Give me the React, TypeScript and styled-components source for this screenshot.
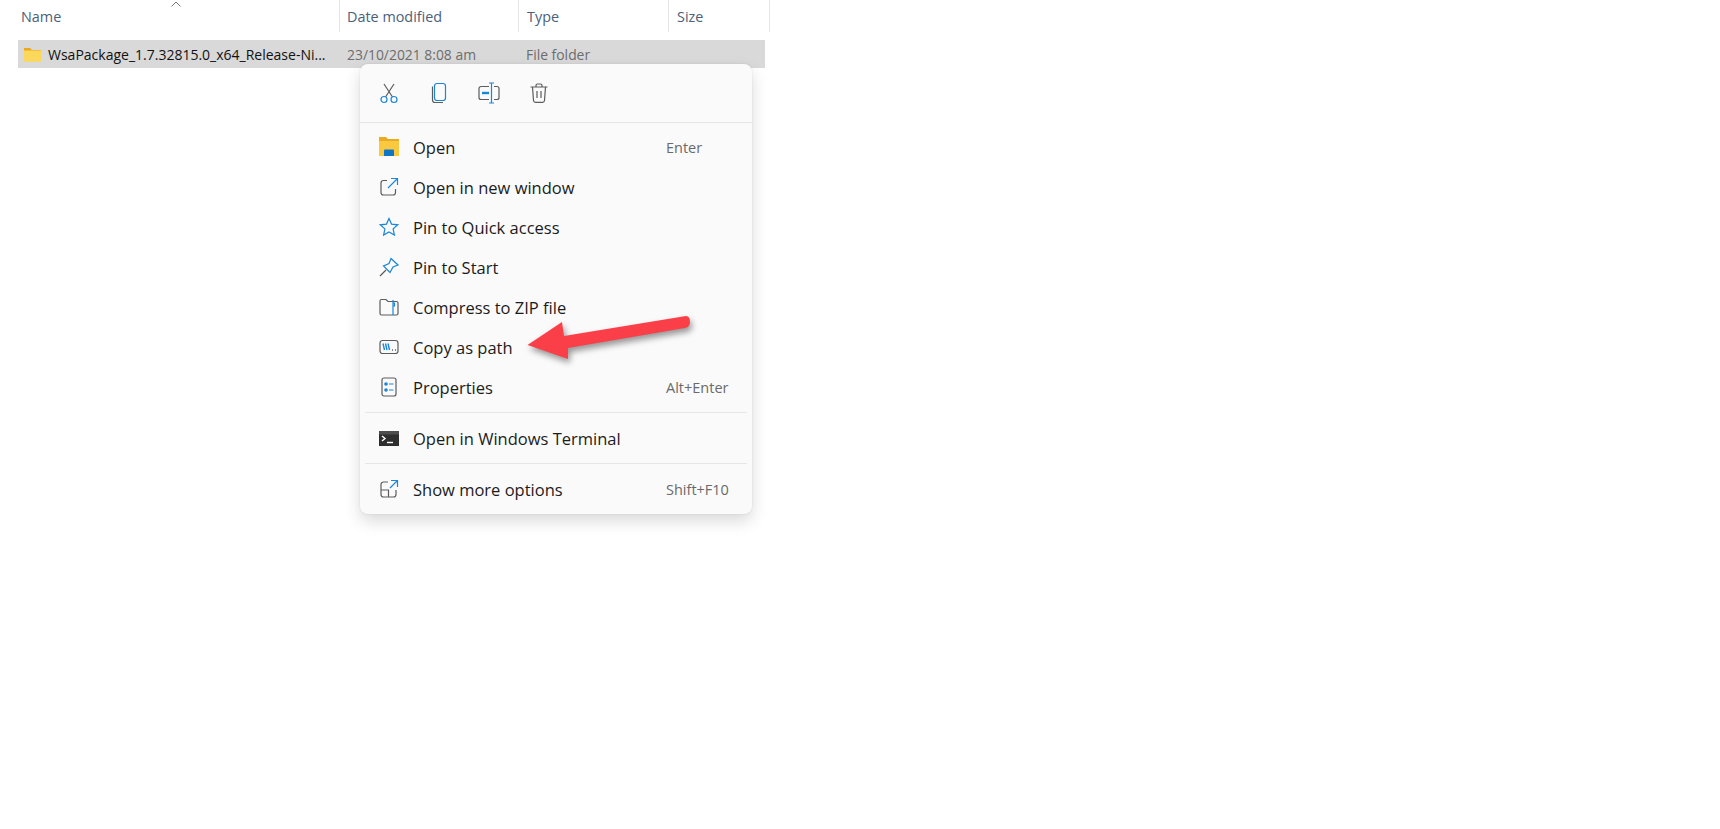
import { FC, ReactNode } from "react";
import styled, { createGlobalStyle } from "styled-components";

const BLUE = "#1a86d8";
const GREY = "#5c5c5c";

const GlobalStyle = createGlobalStyle`
  html, body {
    margin: 0;
    padding: 0;
    background: #fff;
  }
  body {
    font-family: "Open Sans", "Noto Sans", "Liberation Sans", sans-serif;
    overflow: hidden;
  }
`;

const Page = styled.div`
  position: relative;
  width: 1720px;
  height: 829px;
  background: #fff;
`;

const HeaderRow = styled.div`
  position: relative;
  display: grid;
  grid-template-columns: 340px 179px 150px 101px;
  height: 32px;
`;

const HeaderCell = styled.div<{ $pad: number }>`
  display: flex;
  align-items: center;
  padding-left: ${({ $pad }) => $pad}px;
  border-right: 1px solid #e5e5e5;
  font-size: 14.4px;
  color: #4c607a;
`;

const SortChevron = styled.svg`
  position: absolute;
  left: 170px;
  top: 0;
`;

const FileRow = styled.div`
  display: grid;
  grid-template-columns: 329px 179px 150px;
  align-items: center;
  height: 28px;
  width: 747px;
  margin: 8px 0 0 18px;
  background: #d9d9d9;
  font-size: 13.9px;
  color: #6d6d6d;
`;

const FileName = styled.div`
  display: flex;
  align-items: center;
  gap: 6px;
  padding-left: 5px;
  font-size: 14px;
  color: #111;
`;

const FileCell = styled.div`
  white-space: nowrap;
`;

const Menu = styled.div`
  position: absolute;
  left: 360px;
  top: 64px;
  width: 392px;
  height: 450px;
  box-sizing: border-box;
  background: #fafafa;
  border-radius: 8px;
  box-shadow: 0 7px 16px rgba(0, 0, 0, 0.15), 0 0 2px rgba(0, 0, 0, 0.1);
`;

const Toolbar = styled.div`
  display: flex;
  align-items: center;
  gap: 28px;
  height: 59px;
  padding-left: 18px;
  border-bottom: 1px solid #e6e6e6;
  box-sizing: border-box;
`;

const ToolIcon = styled.svg`
  width: 22px;
  height: 22px;
  flex: none;
`;

const Items = styled.div`
  padding-top: 4px;
`;

const ItemRow = styled.div`
  display: flex;
  align-items: center;
  height: 40px;
  padding: 0 0 0 19px;
`;

const ItemIcon = styled.svg`
  width: 20px;
  height: 20px;
  flex: none;
  margin-right: 14px;
`;

const ItemLabel = styled.span`
  flex: 1;
  font-size: 16.5px;
  color: #1c1c1c;
`;

const Shortcut = styled.span`
  width: 86px;
  font-size: 14.5px;
  color: #6a6a6a;
`;

const Divider = styled.div`
  height: 1px;
  margin: 5px;
  background: #e6e6e6;
`;

const Arrow = styled.svg`
  position: absolute;
  left: 500px;
  top: 290px;
  filter: drop-shadow(2px 4px 3px rgba(0, 0, 0, 0.4));
`;

const Item: FC<{ icon: ReactNode; label: string; shortcut?: string }> = ({ icon, label, shortcut }) => (
  <ItemRow>
    <ItemIcon viewBox="0 0 20 20" fill="none" strokeWidth={1.2}>
      {icon}
    </ItemIcon>
    <ItemLabel>{label}</ItemLabel>
    {shortcut && <Shortcut>{shortcut}</Shortcut>}
  </ItemRow>
);

export default function App() {
  return (
    <Page>
      <GlobalStyle />
      <HeaderRow>
        <HeaderCell $pad={21}>Name</HeaderCell>
        <HeaderCell $pad={7}>Date modified</HeaderCell>
        <HeaderCell $pad={8}>Type</HeaderCell>
        <HeaderCell $pad={8}>Size</HeaderCell>
        <SortChevron width="12" height="8" viewBox="0 0 12 8" fill="none" stroke="#7a7a7a" strokeWidth="1">
          <path d="M1.5 6.5 6 2l4.5 4.5" />
        </SortChevron>
      </HeaderRow>

      <FileRow>
        <FileName>
          <svg width="19" height="17" viewBox="0 0 19 17">
            <path d="M1 2h6l2 2h9v2H1z" fill="#e8a91f" />
            <path d="M1 4.500h17V15a.8.8 0 0 1-.8.8H1.800A.8.8 0 0 1 1 15z" fill="#fbd75c" />
          </svg>
          <span>WsaPackage_1.7.32815.0_x64_Release-Ni...</span>
        </FileName>
        <FileCell>23/10/2021 8:08 am</FileCell>
        <FileCell>File folder</FileCell>
      </FileRow>

      <Menu>
        <Toolbar>
          <ToolIcon viewBox="0 0 22 22" fill="none" strokeWidth={1.2}>
            <path d="M6 2l8.500 13M16 2L7.500 15" stroke={GREY} />
            <circle cx="6" cy="17.500" r="3" stroke={BLUE} />
            <circle cx="16" cy="17.500" r="3" stroke={BLUE} />
          </ToolIcon>
          <ToolIcon viewBox="0 0 22 22" fill="none" strokeWidth={1.2}>
            <path d="M4.500 4.500v13.500a2.500 2.500 0 0 0 2.500 2.500h8" stroke={GREY} />
            <rect x="6.500" y="1.500" width="11" height="17" rx="2.500" stroke={BLUE} />
          </ToolIcon>
          <ToolIcon viewBox="0 0 22 22" fill="none" strokeWidth={1.2}>
            <path d="M11 4.500H3a2 2 0 0 0-2 2v9a2 2 0 0 0 2 2h8M16 4.500h3a2 2 0 0 1 2 2v9a2 2 0 0 1-2 2h-3" stroke={GREY} />
            <path d="M11 1h5M11 21h5M13.500 1v20" stroke={BLUE} />
            <path d="M4 11h7" stroke={BLUE} strokeWidth={2.4} />
          </ToolIcon>
          <ToolIcon viewBox="0 0 22 22" fill="none" strokeWidth={1.2}>
            <path d="M2.500 5h17M8 5V3.500A1.500 1.500 0 0 1 9.500 2h3A1.500 1.500 0 0 1 14 3.500V5M4.500 5l1 13.500a2 2 0 0 0 2 1.800h7a2 2 0 0 0 2-1.800l1-13.500M9 9v7M13 9v7" stroke={GREY} />
          </ToolIcon>
        </Toolbar>

        <Items>
          <Item
            label="Open"
            shortcut="Enter"
            icon={
              <>
                <path d="M0 0h7l2 2h11v16H0z" fill="#e9ab1f" />
                <path d="M0 4h20v15H0z" fill="#fbc93f" />
                <path d="M6 12.500h8a1 1 0 0 1 1 1V19H5v-5.500a1 1 0 0 1 1-1z" fill="#0f75c5" />
              </>
            }
          />
          <Item
            label="Open in new window"
            icon={
              <>
                <path d="M8 3.500H4.500a2.500 2.500 0 0 0-2.500 2.500v9.500A2.500 2.500 0 0 0 4.500 18H14a2.500 2.500 0 0 0 2.500-2.500V12" stroke={GREY} />
                <path d="M12 1.500h6.500V8M18.500 1.500 9 11" stroke={BLUE} />
              </>
            }
          />
          <Item
            label="Pin to Quick access"
            icon={<path d="M10 1.500l2.500 5.600 6.200.7-4.600 4.100 1.300 6.100L10 15l-5.400 3 1.300-6.100L1.300 7.800l6.200-.7z" stroke={BLUE} />}
          />
          <Item
            label="Pin to Start"
            icon={
              <>
                <path d="M12 1.500l7 6.500-5 2-3 5.500-6.500-6.500 5.500-2.500z" stroke={BLUE} />
                <path d="M7 13l-6 6" stroke={GREY} />
              </>
            }
          />
          <Item
            label="Compress to ZIP file"
            icon={
              <>
                <path d="M1 4a1.500 1.500 0 0 1 1.500-1.500H7l2 2h8.500A1.500 1.500 0 0 1 19 6v10.500a1.500 1.500 0 0 1-1.500 1.500h-15A1.500 1.500 0 0 1 1 16.500z" stroke={GREY} />
                <path d="M14 3v15M14 6h1.500v3H14" stroke={BLUE} />
              </>
            }
          />
          <Item
            label="Copy as path"
            icon={
              <>
                <rect x="1" y="3.500" width="18" height="13" rx="2.500" stroke={GREY} />
                <path d="M4 6.500l1.500 6.500M6.500 6.500l1.500 6.500M9 6.500l1.500 6.500" stroke={BLUE} strokeWidth={1.4} />
                <path d="M13 13h1M16 13h1" stroke={GREY} strokeWidth={1.4} />
              </>
            }
          />
          <Item
            label="Properties"
            shortcut="Alt+Enter"
            icon={
              <>
                <rect x="3" y="1" width="14" height="18" rx="2" stroke={GREY} />
                <circle cx="7" cy="7" r="1.800" fill={BLUE} />
                <circle cx="7" cy="13" r="1.800" fill={BLUE} />
                <path d="M10 7h4.500M10 13h4.500" stroke={BLUE} />
              </>
            }
          />
          <Divider />
          <Item
            label="Open in Windows Terminal"
            icon={
              <>
                <path d="M0 3h20v15H0z" fill="#2e2e2e" />
                <path d="M0 3h20v3.500H0z" fill="#4d4d4d" />
                <path d="M3 8l3 2.500-3 2.500" stroke="#fff" strokeWidth={1.4} />
                <path d="M8 14.500h6" stroke="#fff" strokeWidth={1.4} />
              </>
            }
          />
          <Divider />
          <Item
            label="Show more options"
            shortcut="Shift+F10"
            icon={
              <>
                <path d="M9 3H4.500A2.500 2.500 0 0 0 2 5.500v10A2.500 2.500 0 0 0 4.500 18h10a2.500 2.500 0 0 0 2.500-2.500V11M2 11h7.500v7" stroke={GREY} />
                <path d="M12 1.500h6.500V8M18.500 1.500 11 9" stroke={BLUE} />
              </>
            }
          />
        </Items>
      </Menu>

      <Arrow width="200" height="90" viewBox="0 0 200 90">
        <path d="M27.500 55 62 32 64 46 186 26Q190 26 190 32 190 37 185 38L68 58 68 69z" fill="#fb3f48" />
      </Arrow>
    </Page>
  );
}
